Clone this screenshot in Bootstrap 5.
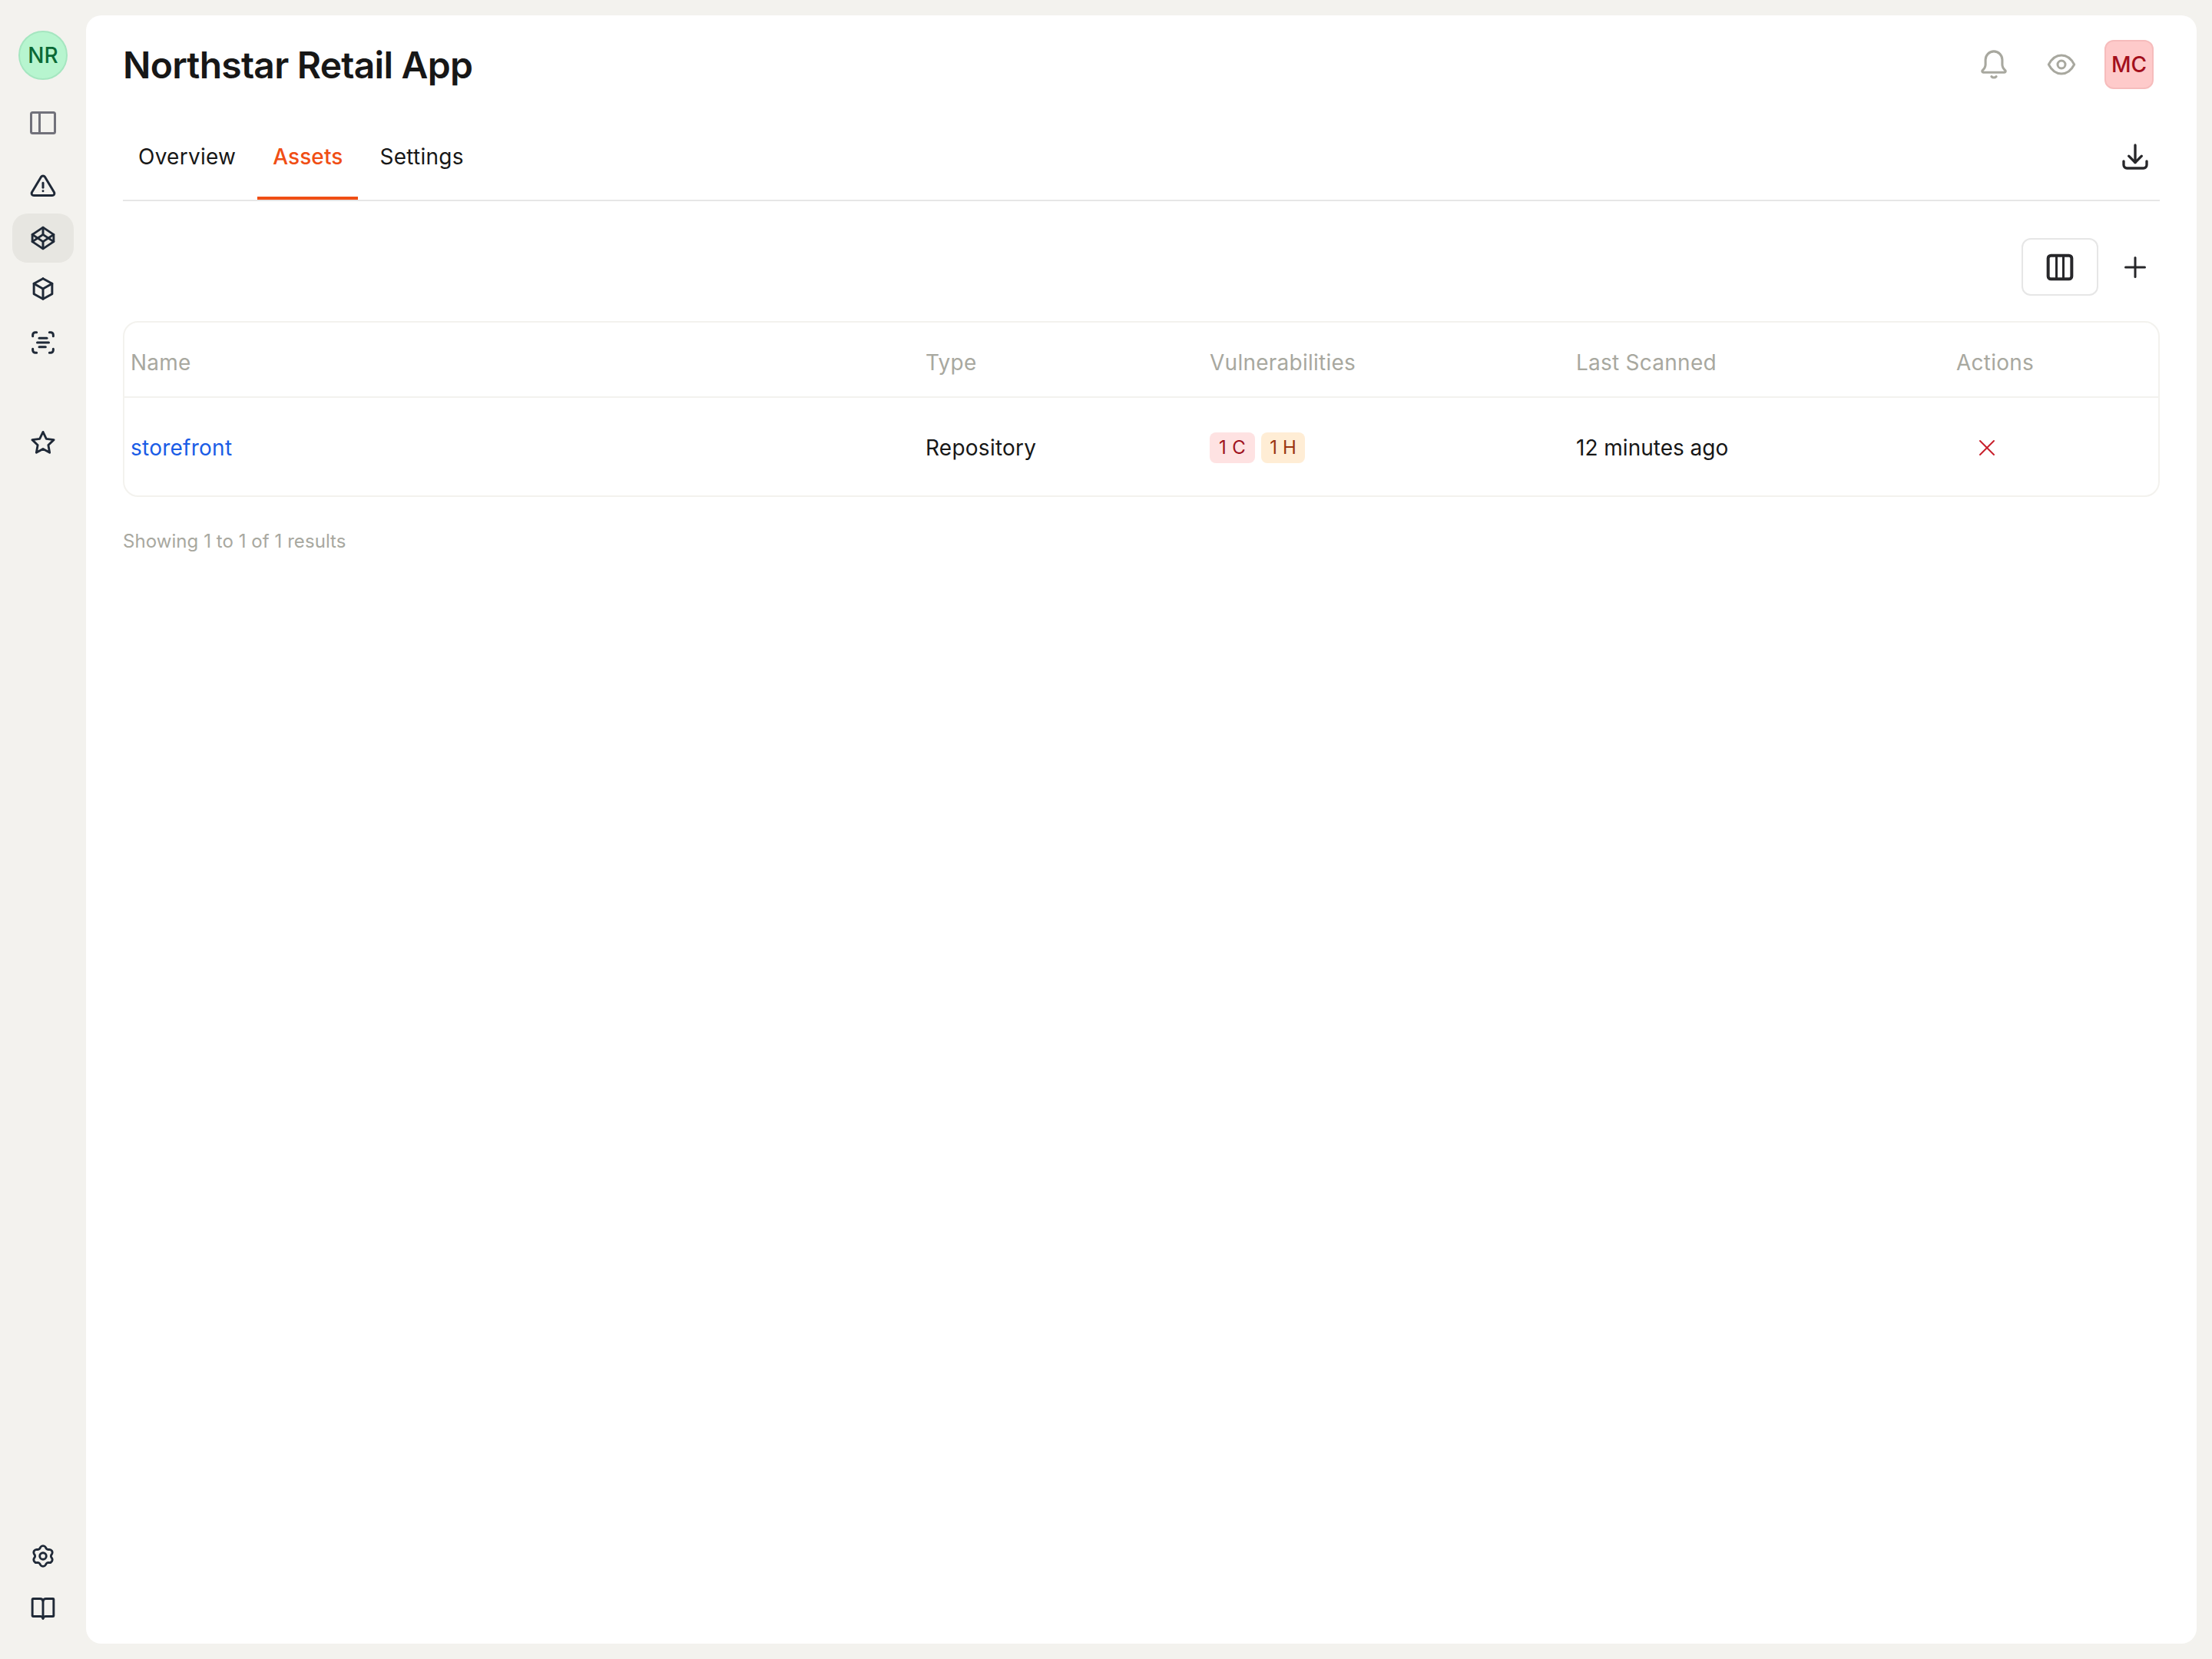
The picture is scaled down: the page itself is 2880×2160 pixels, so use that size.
<!DOCTYPE html>
<html lang="en">
<head>
<meta charset="utf-8">
<title>Northstar Retail App</title>
<link rel="stylesheet" href="https://cdn.jsdelivr.net/npm/bootstrap@5.3.0/dist/css/bootstrap.min.css">
<style>
html,body{height:100%}
body{background:#f3f2ee;font-family:Inter,"Liberation Sans",sans-serif;color:#171717;font-size:28px}
.app-shell{height:2160px}
.side-rail{width:112px;padding:40px 0 35px}
.rail-avatar{width:64px;height:64px;background:#b7f5cf;border:2px solid #a5e6c0;color:#0b6a36;font-size:28px;font-weight:500;border-radius:50%}
.rail-top{margin-bottom:18px;margin-top:24px}
.rail-group{gap:4px}
.rail-item{width:80px;height:64px;border-radius:20px;color:#1f2937}
.rail-item.is-active{background:#e7e6e1}
.rail-gap{margin-top:62px}
.rail-bottom{gap:3px}
.rail-item svg,.icon-slot svg{width:40px;height:40px;fill:none;stroke:currentColor;stroke-width:1.8;stroke-linecap:round;stroke-linejoin:round}
.main-panel{background:#fff;margin:20px 20px 20px 0;border-radius:20px;padding:0 48px;min-width:0}
.head-row{height:128px}
.page-title{font-size:48px;font-weight:600;line-height:1;margin:2px 0 0;color:#171717;letter-spacing:-.75px}
.head-tools{padding-right:8px}
.muted-icon{color:#a8a89f}
.eye-slot{margin-left:48px;margin-right:36px}
.user-chip{width:64px;height:64px;background:#fecaca;border:2px solid #f6bcbc;color:#a30f1c;font-size:28px;font-weight:500;border-radius:12px}
.tab-strip{height:114px;border-bottom:2px solid #e6e6e6}
.tab-list{gap:8px;height:112px;letter-spacing:.25px}
.tab-list .nav-link{padding:0 20px;height:112px;display:flex;align-items:center;color:#171717;font-size:28px;font-weight:400;margin-bottom:0}
.tab-list .nav-link.is-current{color:#f04e14;font-weight:500;border-bottom:4px solid #f04e14;padding-top:4px;letter-spacing:.1px}
.slot-64{width:64px}
.tool-row{margin-top:48px;margin-bottom:33px;gap:16px}
.column-toggle{width:100px;height:75px;border:2px solid #e6e6e6;border-radius:12px;background:#fff;color:#27272a;padding:0}
.icon-plain{border:0;background:transparent;padding:0;color:#27272a}
.data-frame{border:2px solid #f3f2ee;border-radius:20px;overflow:hidden}
.asset-grid{table-layout:fixed;width:100%;margin:0;font-size:28px;letter-spacing:.25px}
.asset-grid th,.asset-grid td{padding:0 0 0 8px;vertical-align:middle;border-bottom:0;box-shadow:none}
.asset-grid thead th{height:97px;padding-top:8px;font-weight:400;color:#a8a89f;border-bottom:2px solid #f3f2ee}
.asset-grid tbody td{height:128px;padding-top:2px;color:#171717}
.asset-grid .time-cell{letter-spacing:0}
.asset-link{color:#1a5ce6;text-decoration:none}
.sev-tag{display:inline-flex;align-items:center;justify-content:center;height:40px;padding:0 12px;border-radius:8px;font-size:24px;font-weight:400;letter-spacing:.4px}
.sev-crit{background:#fee2e2;color:#9f1220}
.sev-high{background:#ffedd5;color:#9a3412;padding:0 11px;letter-spacing:.1px}
.sev-list{gap:8px}
.del-btn{border:0;background:transparent;padding:0 0 0 24px;color:#c81e2a;display:flex}
.del-btn svg{width:32px;height:32px;fill:none;stroke:currentColor;stroke-width:2;stroke-linecap:round}
.results-note{margin-top:40px;font-size:24px;line-height:36px;color:#a8a89f;letter-spacing:.06px}
</style>
</head>
<body>
<div class="app-shell d-flex">
  <aside class="side-rail d-flex flex-column align-items-center flex-shrink-0">
    <div class="rail-avatar d-flex align-items-center justify-content-center flex-shrink-0">NR</div>
    <div class="rail-item rail-top d-flex align-items-center justify-content-center" style="color:#71717a">
      <svg viewBox="0 0 40 40" style="stroke-width:3"><rect x="4.500" y="6.500" width="31" height="27" rx="2"/><path d="M15.500 6.500v27"/></svg>
    </div>
    <div class="rail-group d-flex flex-column">
      <div class="rail-item d-flex align-items-center justify-content-center">
        <svg viewBox="-1.500 -2 27 27" style="stroke-width:2"><path d="M12 9v4"/><path d="M10.363 3.591l-8.106 13.534a1.914 1.914 0 0 0 1.636 2.871h16.214a1.914 1.914 0 0 0 1.636 -2.87l-8.106 -13.536a1.914 1.914 0 0 0 -3.274 0z"/><path d="M12 16h.01"/></svg>
      </div>
      <div class="rail-item is-active d-flex align-items-center justify-content-center">
        <svg viewBox="-1 -1 26 26" style="stroke-width:1.900"><path d="M3 15l9 6l9 -6l-9 -6l-9 6"/><path d="M3 9l9 6l9 -6l-9 -6l-9 6"/><path d="M3 9l0 6"/><path d="M21 9l0 6"/><path d="M12 3l0 6"/><path d="M12 15l0 6"/></svg>
      </div>
      <div class="rail-item d-flex align-items-center justify-content-center">
        <svg viewBox="-1.500 -.15 27 27" style="stroke-width:2"><path d="M12 3l8 4.500l0 9l-8 4.500l-8 -4.500l0 -9l8 -4.500"/><path d="M12 12l8 -4.500"/><path d="M12 12l0 9"/><path d="M12 12l-8 -4.500"/></svg>
      </div>
      <div class="rail-item d-flex align-items-center justify-content-center">
        <svg viewBox="0 0 24 24"><path d="M4 7V6a2 2 0 0 1 2-2h1"/><path d="M17 4h1a2 2 0 0 1 2 2v1"/><path d="M20 17v1a2 2 0 0 1-2 2h-1"/><path d="M7 20H6a2 2 0 0 1-2-2v-1"/><path d="M9 8.500h6"/><path d="M7.500 12h9"/><path d="M9 15.500h5"/></svg>
      </div>
      <div class="rail-item rail-gap d-flex align-items-center justify-content-center">
        <svg viewBox="-.5 -.5 25 25" style="stroke-width:1.800"><path d="M12 17.300l-5.400 3 1.100 -6.100l-4.500 -4.300l6.100 -.8l2.700 -5.600l2.700 5.600l6.100 .8l-4.500 4.300l1.100 6.100z"/></svg>
      </div>
    </div>
    <div class="rail-bottom d-flex flex-column mt-auto">
      <div class="rail-item d-flex align-items-center justify-content-center">
        <svg viewBox="-2 -2 28 28" style="stroke-width:2"><path d="M9.570 4.060A2.800 2.800 0 0 1 14.430 4.060A2.500 2.500 0 0 0 17.660 5.930A2.800 2.800 0 0 1 20.090 10.130A2.500 2.500 0 0 0 20.090 13.870A2.800 2.800 0 0 1 17.660 18.070A2.500 2.500 0 0 0 14.430 19.940A2.800 2.800 0 0 1 9.570 19.940A2.500 2.500 0 0 0 6.340 18.070A2.800 2.800 0 0 1 3.910 13.870A2.500 2.500 0 0 0 3.910 10.130A2.800 2.800 0 0 1 6.340 5.930A2.500 2.500 0 0 0 9.570 4.060z"/><circle cx="12" cy="12" r="3"/></svg>
      </div>
      <div class="rail-item d-flex align-items-center justify-content-center">
        <svg viewBox="-1 -1 26 26" style="stroke-width:1.900"><path d="M3.500 4.500h6a2.500 2.500 0 0 1 2.500 2 2.500 2 0 0 1 2.500-2h6a.5.5 0 0 1 .5.5v14a.5.5 0 0 1-.5.5h-6a2.500 2.500 0 0 0-2.500 1.500 2.500 2.500 0 0 0-2.500-1.500h-6a.5.5 0 0 1-.5-.5V5a.5.5 0 0 1 .5-.5z"/><path d="M12 6.500v15"/></svg>
      </div>
    </div>
  </aside>
  <main class="main-panel flex-grow-1">
    <header class="head-row d-flex align-items-center justify-content-between">
      <h1 class="page-title">Northstar Retail App</h1>
      <div class="head-tools d-flex align-items-center">
        <span class="icon-slot muted-icon d-flex"><svg viewBox="1 1.400 22 22" style="stroke-width:1.700"><path d="M12 3a6 6 0 0 0-6 6v3.500c0 1.500-1 3-2.200 4.200a.8.8 0 0 0 .6 1.300h15.200a.8.8 0 0 0 .6-1.300c-1.200-1.200-2.200-2.700-2.200-4.200V9a6 6 0 0 0-6-6z"/><path d="M10.300 21a2.300 2.300 0 0 0 3.400 0"/></svg></span>
        <span class="icon-slot muted-icon eye-slot d-flex"><svg viewBox="0 0 24 24"><path d="M2 12c2.500-4.800 6-7.200 10-7.200s7.500 2.400 10 7.200c-2.500 4.800-6 7.200-10 7.200S4.500 16.800 2 12z"/><circle cx="12" cy="12" r="3"/></svg></span>
        <div class="user-chip d-flex align-items-center justify-content-center">MC</div>
      </div>
    </header>
    <div class="tab-strip d-flex align-items-center justify-content-between">
      <nav class="nav tab-list">
        <a class="nav-link" href="#">Overview</a>
        <a class="nav-link is-current" href="#">Assets</a>
        <a class="nav-link" href="#">Settings</a>
      </nav>
      <button class="icon-plain icon-slot slot-64 d-flex justify-content-center" type="button" aria-label="Download"><svg viewBox="0 0 24 24" style="stroke-width:2"><path d="M3 15.500v3a2.500 2.500 0 0 0 2.500 2.500h13a2.500 2.500 0 0 0 2.500-2.500v-3"/><path d="M12 3v13.500"/><path d="M7 11.500l5 5 5-5"/></svg></button>
    </div>
    <div class="tool-row d-flex justify-content-end align-items-center">
      <button class="column-toggle icon-slot d-flex align-items-center justify-content-center" type="button" aria-label="Columns"><svg viewBox="0 0 24 24" style="stroke-width:2.400"><rect x="2.800" y="2.800" width="18.400" height="18.400" rx="2.200"/><path d="M9.300 3v18" style="stroke-width:1.800"/><path d="M14.700 3v18" style="stroke-width:1.800"/></svg></button>
      <button class="icon-plain icon-slot slot-64 d-flex justify-content-center" type="button" aria-label="Add"><svg viewBox="0 0 24 24"><path d="M12 4.500v15"/><path d="M4.500 12h15"/></svg></button>
    </div>
    <div class="data-frame">
      <table class="table asset-grid">
        <colgroup><col style="width:1035px"><col style="width:370px"><col style="width:477px"><col style="width:495px"><col></colgroup>
        <thead><tr><th>Name</th><th>Type</th><th>Vulnerabilities</th><th>Last Scanned</th><th>Actions</th></tr></thead>
        <tbody><tr>
          <td><a class="asset-link" href="#">storefront</a></td>
          <td>Repository</td>
          <td><div class="sev-list d-flex"><span class="sev-tag sev-crit">1 C</span><span class="sev-tag sev-high">1 H</span></div></td>
          <td class="time-cell">12 minutes ago</td>
          <td><button class="del-btn" type="button" aria-label="Remove"><svg viewBox="0 0 32 32"><path d="M7 7l18 18"/><path d="M25 7L7 25"/></svg></button></td>
        </tr></tbody>
      </table>
    </div>
    <p class="results-note">Showing 1 to 1 of 1 results</p>
  </main>
</div>
<script src="https://cdn.jsdelivr.net/npm/bootstrap@5.3.0/dist/js/bootstrap.bundle.min.js"></script>
</body>
</html>
